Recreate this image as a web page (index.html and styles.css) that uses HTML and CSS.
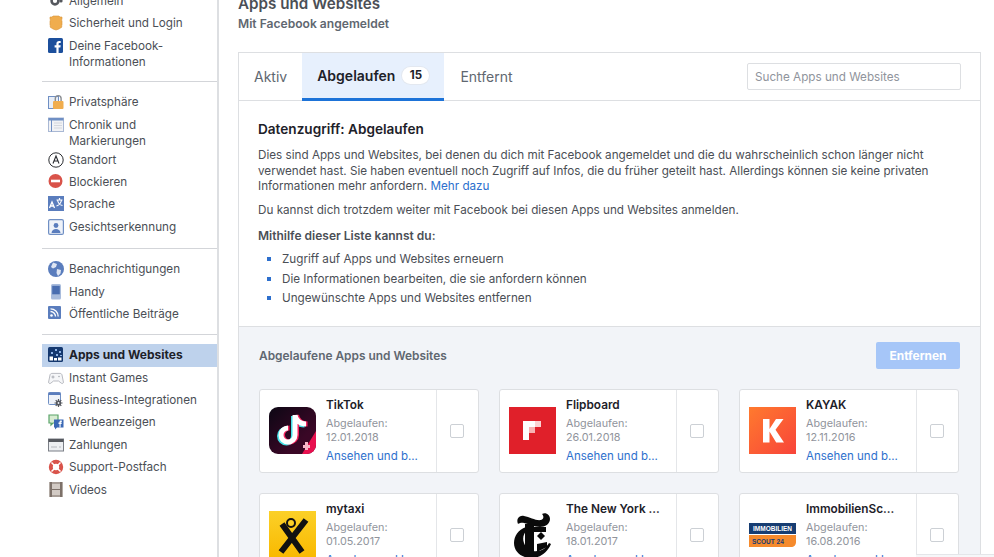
FILE: index.html
```html
<!DOCTYPE html>
<html>
  <head>
    <meta name="viewport" content="width=device-width, initial-scale=1" />
    <link rel="stylesheet" href="styles.css">
  </head>
  <body>
    <div class="page">
      <!-- Settings menu -->
      <nav class="sidebar">
        <ul class="nav-group">
          <li class="nav-row">
            <svg class="nav-icon" viewBox="0 0 16 16"><circle cx="7" cy="8" r="3.4" fill="none" stroke="#55585e" stroke-width="2.6"/><circle cx="13" cy="8" r="1.6" fill="#55585e"/></svg>
            <span>Allgemein</span>
          </li>
          <li class="nav-row">
            <svg class="nav-icon" viewBox="0 0 16 16"><path d="M2 2h2l1-1h6l1 1h2v2l-.5 1 .5 1v4l-.5 1 .5 1-3 2-3 1-3-1-3-2 .5-1-.5-1V6l.5-1L2 4z" fill="#f0ad4e" stroke="#d9963a" stroke-width=".6"/></svg>
            <span>Sicherheit und Login</span>
          </li>
          <li class="nav-row">
            <svg class="nav-icon" viewBox="0 0 16 16"><rect width="15" height="15" rx="1.5" fill="#1c4f9c"/><path d="M10.6 15V9.4h1.8l.3-2.1h-2.1V6c0-.6.2-1 1-1h1.1V3.1c-.2 0-.9-.1-1.6-.1-1.6 0-2.7 1-2.7 2.8v1.5H6.6v2.1h1.8V15z" fill="#fff"/></svg>
            <span>Deine Facebook-<br>Informationen</span>
          </li>
        </ul>
        <ul class="nav-group">
          <li class="nav-row">
            <svg class="nav-icon" viewBox="0 0 16 16"><rect x=".5" y="2.5" width="10" height="12" fill="#e8eef7" stroke="#6f8fc4"/><rect x="5" y="7" width="10.5" height="8" rx="1" fill="#f0ad4e"/><path d="M7.3 7V4.5a2.9 2.9 0 0 1 5.8 0V7" fill="none" stroke="#8a8d91" stroke-width="1.4"/></svg>
            <span>Privatsphäre</span>
          </li>
          <li class="nav-row nav-row-tight">
            <svg class="nav-icon" viewBox="0 0 16 16"><rect x=".5" y="1" width="15" height="13.5" fill="#f1f2f5" stroke="#a9b8d4"/><rect x=".5" y="1" width="15" height="2.5" fill="#6f8fc4"/><path d="M3.5 1v13.5" stroke="#6f8fc4"/><path d="M6 6h8M6 8.5h8M6 11h8" stroke="#d4d7dd"/></svg>
            <span>Chronik und<br>Markierungen</span>
          </li>
          <li class="nav-row">
            <svg class="nav-icon" viewBox="0 0 16 16"><circle cx="8" cy="8" r="7.2" fill="#fff" stroke="#2b2d31" stroke-width="1"/><path d="M5 11.5 8 4l3 7.5M6.2 9h3.6" fill="none" stroke="#2b2d31" stroke-width="1.1"/></svg>
            <span>Standort</span>
          </li>
          <li class="nav-row">
            <svg class="nav-icon" viewBox="0 0 16 16"><circle cx="7.5" cy="7" r="7" fill="#d9534a"/><rect x="3" y="5.7" width="9" height="2.6" fill="#fff"/></svg>
            <span>Blockieren</span>
          </li>
          <li class="nav-row">
            <svg class="nav-icon" viewBox="0 0 16 16"><rect width="16" height="15" fill="#5a7dbd"/><path d="M1.5 12 4 6l2.5 6M2.5 10h3" fill="none" stroke="#fff" stroke-width="1.3"/><path d="M8.5 4h6M11.5 2v2M9.5 4c.5 3 2.5 5 5 5.5M13.5 4c-.5 3-2 5-5 6" fill="none" stroke="#fff" stroke-width="1.2"/></svg>
            <span>Sprache</span>
          </li>
          <li class="nav-row">
            <svg class="nav-icon" viewBox="0 0 16 16"><rect x=".6" y=".6" width="14.8" height="14.8" rx="1.5" fill="#eef2f9" stroke="#6f8fc4" stroke-width="1.2"/><circle cx="8" cy="6.5" r="2.4" fill="#5a7dbd"/><path d="M3.5 14c.4-3 2.2-4 4.5-4s4.1 1 4.5 4z" fill="#5a7dbd"/></svg>
            <span>Gesichtserkennung</span>
          </li>
        </ul>
        <ul class="nav-group">
          <li class="nav-row">
            <svg class="nav-icon" viewBox="0 0 16 16"><circle cx="8" cy="8" r="8" fill="#5a7dbd"/><path d="M5 1.5 9 3 8 6 5 7.5 3 6zM9 8l4 1-.5 3.5L10 15 8.500 12z" fill="#dfe6f3"/></svg>
            <span>Benachrichtigungen</span>
          </li>
          <li class="nav-row">
            <svg class="nav-icon" viewBox="0 0 16 16"><rect x="3" y="0" width="10" height="15.5" rx="1.5" fill="#a9bcdc"/><rect x="4.2" y="1.8" width="7.6" height="8.5" fill="#4a6eb0"/></svg>
            <span>Handy</span>
          </li>
          <li class="nav-row">
            <svg class="nav-icon" viewBox="0 0 16 16"><rect width="13" height="13" rx="1" fill="#5a7dbd"/><circle cx="3.5" cy="9.5" r="1.3" fill="#fff"/><path d="M2.5 5.5a5 5 0 0 1 5 5M2.5 2.8a7.7 7.7 0 0 1 7.7 7.7" fill="none" stroke="#fff" stroke-width="1.3"/></svg>
            <span>Öffentliche Beiträge</span>
          </li>
        </ul>
        <ul class="nav-group">
          <li class="nav-row nav-row-active">
            <svg class="nav-icon" viewBox="0 0 16 16"><rect width="15" height="15" rx="1.5" fill="#14386f"/><path d="M3 5h2v2H3zM7 2h2v2H7zM11 4h2v2h-2zM8 7h2v2H8zM12 8h2v1h-2z" fill="#8fb3e6"/><path d="M1.5 9.5H5v4H1.5zM6 11h3v2.500H6zM10 10.500h3.500v3H10z" fill="#fff"/></svg>
            <span>Apps und Websites</span>
          </li>
          <li class="nav-row">
            <svg class="nav-icon" viewBox="0 0 16 16"><path d="M.6 12 2 5c.2-1 1-1.6 2-1.6h8c1 0 1.8.6 2 1.6l1.400 7c.2 1.5-1.400 2-2.300 1L10.500 11h-5L3 13c-1 1-2.600.5-2.400-1z" fill="#f5f6f8" stroke="#a8abb2" stroke-width=".8"/><path d="M3.5 7h3M5 5.5v3" stroke="#a8abb2"/><circle cx="11" cy="6.5" r=".8" fill="#a8abb2"/></svg>
            <span>Instant Games</span>
          </li>
          <li class="nav-row">
            <svg class="nav-icon" viewBox="0 0 16 16"><rect x=".5" y=".5" width="12" height="12" rx="1" fill="#eef2f9" stroke="#6f8fc4"/><rect x=".5" y=".5" width="12" height="2.5" fill="#5a7dbd"/><path d="M10.5 7v8M6.5 11h8M7.7 8.200l5.600 5.600M13.300 8.200l-5.600 5.600" stroke="#55585e" stroke-width="1.2"/><circle cx="10.5" cy="11" r="2.6" fill="#55585e"/><circle cx="10.5" cy="11" r=".9" fill="#eef2f9"/></svg>
            <span>Business-Integrationen</span>
          </li>
          <li class="nav-row">
            <svg class="nav-icon" viewBox="0 0 16 16"><path d="M1 1h9v8H5l-2 2V9H1z" fill="#d8ecd2" stroke="#5aa469" stroke-width="1.2"/><path d="M6 5.5h9.500v8H9L7 15.500V13.500H6z" fill="#3b69b5"/><path d="M11.500 13.500V10h-1V8.600h1V8c0-1 .6-1.400 1.500-1.400h.8V8H13c-.3 0-.4.2-.4.5v.1h1.100L13.600 10h-1v3.500z" fill="#fff"/></svg>
            <span>Werbeanzeigen</span>
          </li>
          <li class="nav-row">
            <svg class="nav-icon" viewBox="0 0 16 16"><rect x=".5" y="2" width="15" height="12" fill="#eceef1" stroke="#7b7f86"/><rect x=".5" y="2" width="15" height="3" fill="#55585e"/><path d="M3 10h6M11 10h2" stroke="#b5b8be"/></svg>
            <span>Zahlungen</span>
          </li>
          <li class="nav-row">
            <svg class="nav-icon" viewBox="0 0 16 16"><circle cx="8" cy="8" r="5.2" fill="#fff" stroke="#d9534a" stroke-width="4"/><path d="M3.5 3.5 6 6M12.5 3.5 10 6M3.5 12.5 6 10M12.5 12.5 10 10" stroke="#fff" stroke-width="1.5"/></svg>
            <span>Support-Postfach</span>
          </li>
          <li class="nav-row">
            <svg class="nav-icon" viewBox="0 0 16 16"><rect x="1.5" y="0" width="13" height="15" fill="#d2cac4"/><path d="M1.5 0H4v15H1.5zM12 0h2.500v15H12z" fill="#7d7169"/><path d="M4 7.5h8M4 1h8M4 14h8" stroke="#7d7169"/></svg>
            <span>Videos</span>
          </li>
        </ul>
      </nav>

      <main class="content">
        <h1 class="page-title">Apps und Websites</h1>
        <p class="page-sub">Mit Facebook angemeldet</p>

        <section class="panel">
          <div class="tabs">
            <a class="tab">Aktiv</a>
            <a class="tab tab-active">Abgelaufen <span class="tab-count">15</span></a>
            <a class="tab tab-last">Entfernt</a>
            <input class="search" type="text" placeholder="Suche Apps und Websites" />
          </div>

          <div class="intro">
            <h2 class="intro-title">Datenzugriff: Abgelaufen</h2>
            <p class="intro-text">Dies sind Apps und Websites, bei denen du dich mit Facebook angemeldet und die du wahrscheinlich schon länger nicht<br>verwendet hast. Sie haben eventuell noch Zugriff auf Infos, die du früher geteilt hast. Allerdings können sie keine privaten<br>Informationen mehr anfordern. <a class="link">Mehr dazu</a></p>
            <p class="intro-text intro-second">Du kannst dich trotzdem weiter mit Facebook bei diesen Apps und Websites anmelden.</p>
            <p class="intro-lead">Mithilfe dieser Liste kannst du:</p>
            <ul class="intro-list">
              <li>Zugriff auf Apps und Websites erneuern</li>
              <li>Die Informationen bearbeiten, die sie anfordern können</li>
              <li>Ungewünschte Apps und Websites entfernen</li>
            </ul>
          </div>

          <div class="apps">
            <div class="apps-head">
              <span class="apps-title">Abgelaufene Apps und Websites</span>
              <button class="remove-btn" type="button">Entfernen</button>
            </div>
            <div class="app-grid">
              <div class="app-card">
                <div class="app-main">
                  <svg class="app-icon" viewBox="0 0 47 47"><defs><linearGradient id="tt" x1="0" y1="0" x2="1" y2="1"><stop offset="0" stop-color="#0c0714"/><stop offset=".7" stop-color="#3a0726"/></linearGradient></defs><rect width="47" height="47" rx="9" fill="url(#tt)"/><path d="M33 47H38a9 9 0 0 0 9-9V24z" fill="#e8104f"/><g fill="none" stroke-width="5"><path d="M26 8v20a7 7 0 1 1-7-7M26 8c.5 5 5 9 11 9" stroke="#45e0e6" transform="translate(-1.5 1)"/><path d="M26 8v20a7 7 0 1 1-7-7M26 8c.5 5 5 9 11 9" stroke="#f5235e" transform="translate(1.5 0)"/><path d="M26 8v20a7 7 0 1 1-7-7M26 8c.5 5 5 9 11 9" stroke="#fff"/></g><path d="M34 38h2v-3h3v3h2v3h-2v2h-3v-2h-2z" fill="#f7b6c8"/></svg>
                  <div class="app-info">
                    <div class="app-name">TikTok</div>
                    <div class="app-meta">Abgelaufen:<br>12.01.2018</div>
                    <a class="link app-link">Ansehen und b...</a>
                  </div>
                </div>
                <div class="app-check"><span class="checkbox"></span></div>
              </div>
              <div class="app-card">
                <div class="app-main">
                  <svg class="app-icon" viewBox="0 0 47 47"><rect width="47" height="47" fill="#e0202a"/><path d="M14 14h6v19h-6z" fill="#fff"/><path d="M20 14h6v6h-6z" fill="#fff"/><path d="M26 14h6v6h-6z" fill="#fbd3d3"/><path d="M20 20h6v6h-6z" fill="#f7b3b3"/></svg>
                  <div class="app-info">
                    <div class="app-name">Flipboard</div>
                    <div class="app-meta">Abgelaufen:<br>26.01.2018</div>
                    <a class="link app-link">Ansehen und b...</a>
                  </div>
                </div>
                <div class="app-check"><span class="checkbox"></span></div>
              </div>
              <div class="app-card">
                <div class="app-main">
                  <svg class="app-icon" viewBox="0 0 47 47"><defs><linearGradient id="ky" x1="0" y1="0" x2="1" y2="1"><stop offset="0" stop-color="#ff7a2e"/><stop offset="1" stop-color="#f8443a"/></linearGradient></defs><rect width="47" height="47" fill="url(#ky)"/><path d="M14 12h6.5v10L27 12h7.500l-8 10.800L35 35.500h-7.800l-6.700-11v11H14z" fill="#fff"/></svg>
                  <div class="app-info">
                    <div class="app-name">KAYAK</div>
                    <div class="app-meta">Abgelaufen:<br>12.11.2016</div>
                    <a class="link app-link">Ansehen und b...</a>
                  </div>
                </div>
                <div class="app-check"><span class="checkbox"></span></div>
              </div>
              <div class="app-card">
                <div class="app-main">
                  <svg class="app-icon" viewBox="0 0 47 47"><defs><linearGradient id="mt" x1="0" y1="0" x2="0" y2="1"><stop offset="0" stop-color="#fbd028"/><stop offset="1" stop-color="#f9b900"/></linearGradient></defs><rect width="47" height="47" fill="url(#mt)"/><path d="M13 13 33 41M37 9 12 41" fill="none" stroke="#111" stroke-width="6"/><circle cx="22" cy="12" r="4" fill="#fbd028" stroke="#111" stroke-width="2"/></svg>
                  <div class="app-info">
                    <div class="app-name">mytaxi</div>
                    <div class="app-meta">Abgelaufen:<br>01.05.2017</div>
                    <a class="link app-link">Ansehen und b...</a>
                  </div>
                </div>
                <div class="app-check"><span class="checkbox"></span></div>
              </div>
              <div class="app-card">
                <div class="app-main">
                  <svg class="app-icon" viewBox="0 0 47 47"><rect width="47" height="47" fill="#fff"/><g fill="#0a0a0a"><path d="M9 13C7 8 10 4 15 5c6 1 12 5 17 4 3-1 3-4 1-6 4-2 8 1 8 5 0 5-5 8-10 8-6 0-11-3-16-4-3-.5-5 .5-6 1z"/><path d="M17 16C9 19 5 25 5 32c0 9 8 15 17 15 9 0 16-5 20-14l-2-1c-3 5-7 8-12 8-6 1-11-2-13-8-2-5 0-10 3-13z"/><path d="M16 13h9v29h-9z"/><path d="M25 16h12v5H25zM28 33l10-2v5l-10 5z"/><path d="M32 21l4 4-4 4-4-4z"/></g></svg>
                  <div class="app-info">
                    <div class="app-name">The New York ...</div>
                    <div class="app-meta">Abgelaufen:<br>18.01.2017</div>
                    <a class="link app-link">Ansehen und b...</a>
                  </div>
                </div>
                <div class="app-check"><span class="checkbox"></span></div>
              </div>
              <div class="app-card">
                <div class="app-main">
                  <svg class="app-icon" viewBox="0 0 47 47"><rect width="47" height="47" fill="#fff"/><rect y="12" width="47" height="11" fill="#173d72"/><path d="M0 24h47v7c0 3-2 5-5 5H0z" fill="#f58a2c"/><text x="23.5" y="20" class="is-text is-top">IMMOBILIEN</text><text x="3" y="33" class="is-text is-bottom">SCOUT 24</text></svg>
                  <div class="app-info">
                    <div class="app-name">ImmobilienSc...</div>
                    <div class="app-meta">Abgelaufen:<br>16.08.2016</div>
                    <a class="link app-link">Ansehen und b...</a>
                  </div>
                </div>
                <div class="app-check"><span class="checkbox"></span></div>
              </div>
            </div>
          </div>
        </section>
      </main>
    </div>
    <div class="chat-tab"></div>
  </body>
</html>
```

FILE: styles.css
```css
html,
body {
  margin: 0;
  height: 557px;
  overflow: hidden;
  background: #fff;
}

body {
  font-family: Inter, "Liberation Sans", sans-serif;
  font-size: 11.7px;
  color: #4b4f56;
}

.page {
  display: flex;
  margin-top: -10px;
  padding-left: 42px;
}

/* Sidebar */
.sidebar {
  width: 175px;
  height: 620px;
  flex-shrink: 0;
  border-right: 2px solid #dddfe2;
}

.nav-group {
  list-style: none;
  margin: 0 0 9px;
  padding: 0 0 8px;
  border-bottom: 1px solid #d3d5d9;
}

.nav-group:nth-child(2) {
  padding-bottom: 10px;
}

.nav-group:nth-child(3) {
  padding-bottom: 9px;
}

.nav-group:last-child {
  border-bottom: none;
}

.nav-row {
  display: flex;
  align-items: flex-start;
  gap: 5px;
  padding: 3px 0 3.4px 6px;
  line-height: 16px;
  color: #4b4f56;
}

.nav-row-tight {
  padding-bottom: 0;
}

.nav-row-active {
  background: #bed2ec;
  font-size: 12px;
  font-weight: 700;
  color: #1d2129;
}

.nav-icon {
  width: 16px;
  height: 16px;
  flex-shrink: 0;
}

/* Main column */
.content {
  width: 743px;
  margin-left: 19px;
  padding-top: 4px;
}

.page-title {
  margin: 0;
  font-size: 15.2px;
  line-height: 20px;
  font-weight: 600;
  color: #4b4f56;
}

.page-sub {
  margin: 2px 0 0;
  font-size: 12.1px;
  line-height: 16px;
  font-weight: 600;
  color: #606770;
}

.panel {
  margin-top: 20px;
  border: 1px solid #dddfe2;
}

.tabs {
  display: flex;
  align-items: stretch;
  height: 47px;
  border-bottom: 1px solid #dddfe2;
}

.tab {
  display: flex;
  align-items: center;
  padding: 0 15px;
  font-size: 14px;
  color: #606770;
}

.tab-active {
  gap: 7px;
  background: #e7f0fd;
  border-bottom: 3px solid #1d73d8;
  margin-bottom: -1px;
  font-weight: 600;
  color: #1d2129;
}

.tab-last {
  padding-left: 16px;
}

.tab-count {
  width: 27px;
  text-align: center;
  border-radius: 9px;
  background: #fff;
  box-shadow: 0 0 0 1px #e3e8f0;
  font-size: 11.5px;
  font-weight: 700;
  line-height: 17px;
}

.search {
  width: 214px;
  height: 27px;
  box-sizing: border-box;
  margin: 10px 19px 0 auto;
  padding: 0 7px;
  border: 1px solid #dddfe2;
  border-radius: 2px;
  font-family: inherit;
  font-size: 11.7px;
}

.search::placeholder {
  color: #90949c;
}

/* Intro text */
.intro {
  padding: 19px 19px 16px;
}

.intro-title {
  margin: 0 0 10px;
  font-size: 13.6px;
  line-height: 18px;
  font-weight: 600;
  color: #1d2129;
}

.intro-text {
  margin: 0;
  line-height: 15.6px;
}

.intro-second {
  margin-top: 8px;
}

.intro-lead {
  margin: 9.4px 0 0;
  font-size: 12px;
  line-height: 16px;
  font-weight: 600;
}

.intro-list {
  margin: 7.6px 0 0;
  padding: 0 0 0 24px;
  list-style: none;
}

.intro-list li {
  position: relative;
  line-height: 16px;
  margin-bottom: 3.5px;
}

.intro-list li::before {
  content: "";
  position: absolute;
  left: -15px;
  top: 6px;
  width: 4px;
  height: 4px;
  background: #2d6fcd;
}

.link {
  color: #2d6fcd;
}

/* Expired apps */
.apps {
  padding: 15px 20px 40px;
  background: #f2f4f8;
  border-top: 1px solid #dddfe2;
}

.apps-head {
  display: flex;
  justify-content: space-between;
  align-items: center;
  margin-bottom: 20px;
}

.apps-title {
  font-size: 11.9px;
  font-weight: 600;
  color: #606770;
}

.remove-btn {
  width: 84px;
  height: 27px;
  border: none;
  border-radius: 2px;
  background: #a6c6f8;
  color: #fff;
  font-family: inherit;
  font-size: 11.9px;
  font-weight: 700;
}

.app-grid {
  display: grid;
  grid-template-columns: repeat(3, 220px);
  gap: 20px;
}

.app-card {
  display: flex;
  height: 84px;
  box-sizing: border-box;
  background: #fff;
  border: 1px solid #dddfe2;
  border-radius: 3px;
}

.app-main {
  display: flex;
  align-items: center;
  gap: 10px;
  width: 176px;
  box-sizing: border-box;
  padding-left: 9px;
}

.app-icon {
  width: 47px;
  height: 47px;
  flex-shrink: 0;
}

.app-info {
  padding-bottom: 1px;
}

.app-name {
  font-size: 11.8px;
  font-weight: 600;
  color: #1d2129;
  line-height: 16px;
}

.app-meta {
  margin-top: 4.3px;
  color: #90949c;
  font-size: 10.8px;
  line-height: 13.4px;
}

.app-link {
  display: block;
  margin-top: 4px;
  font-size: 11.5px;
  line-height: 16px;
}

.app-check {
  flex: 1;
  display: flex;
  align-items: center;
  justify-content: center;
  padding-right: 2px;
  border-left: 1px solid #e4e6e9;
}

.checkbox {
  width: 12px;
  height: 12px;
  border: 1px solid #ccd0d5;
  border-radius: 2px;
}

.is-text {
  font-family: "Liberation Sans", sans-serif;
  font-size: 6.5px;
  font-weight: 700;
}

.is-top {
  fill: #fff;
  text-anchor: middle;
}

.is-bottom {
  fill: #173d72;
}

/* Chat tab peeking in at the bottom */
.chat-tab {
  position: fixed;
  left: 916px;
  bottom: 0;
  width: 78px;
  height: 2px;
  background: #f6f7f9;
  border-top: 1px solid #e4e6e9;
}
```
